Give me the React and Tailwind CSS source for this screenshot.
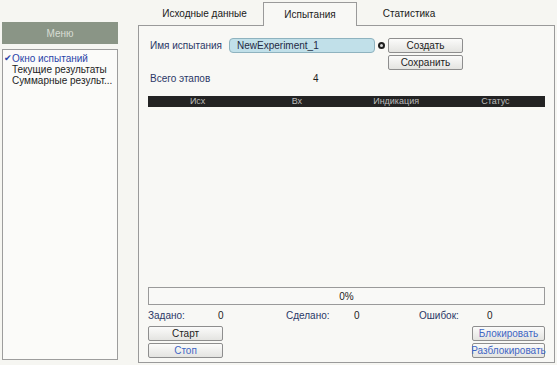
import React from 'react';

const font = { fontFamily: '"Liberation Sans", Arial, sans-serif' };

function Btn({ children, blue, className = '' }) {
    return (
        <div
            className={`flex h-[15px] items-center justify-center rounded-[2px] border border-[#8e8e8e] bg-gradient-to-b from-[#fbfbfa] to-[#e4e4e1] text-[10px] leading-none ${blue ? 'text-[#3f66c4]' : 'text-[#1d1d1d]'} ${className}`}
        >
            {children}
        </div>
    );
}

export default function App() {
    const columns = ['Исх', 'Вх', 'Индикация', 'Статус'];

    return (
        <div className="flex h-[365px] w-[557px] bg-[#f6f6f2] text-[10px] text-[#1d1d1d]" style={font}>
            {/* menu */}
            <div className="flex w-[120px] flex-col pl-[2px] pt-[22px]">
                <div className="flex h-[22px] w-[116px] items-center justify-center bg-[#8a9586] text-[#d8ddd4]">
                    Меню
                </div>
                <div className="mt-[5px] h-[311px] w-[116px] border border-[#9d9d9d] bg-[#fbfbf9] pt-[3px] leading-[11px]">
                    <div className="flex items-center text-[#2a44a8]">
                        <span className="w-[9px] pl-[1px] text-[9px] leading-none">✔</span>
                        Окно испытаний
                    </div>
                    <div className="pl-[9px]">Текущие результаты</div>
                    <div className="pl-[9px]">Суммарные результ...</div>
                </div>
            </div>

            {/* main area */}
            <div className="ml-[18px] flex w-[417px] flex-col pb-[2px]">
                <div className="flex h-[25px] items-end">
                    <div className="flex h-[23px] w-[125px] items-center justify-center pl-[8px] text-[#202020]">Исходные данные</div>
                    <div className="relative z-10 -mb-px flex h-[24px] w-[94px] items-center justify-center border border-b-0 border-[#9a9a9a] bg-[#f8f8f5] text-[#202020]">
                        Испытания
                    </div>
                    <div className="flex h-[23px] w-[104px] items-center justify-center text-[#202020]">Статистика</div>
                </div>

                <div className="flex flex-1 flex-col border border-[#9a9a9a] bg-[#f8f8f5] px-[9px] pt-[12px]">
                    <div className="flex">
                        <div className="flex h-[15px] w-[81px] items-center pl-[2px] text-[#2a3766]">Имя испытания</div>
                        <div className="flex h-[15px] w-[146px] items-center rounded-[4px] border border-[#8fb3bf] bg-[#c1e0e9] pl-[7px] text-[#1f2a44]">
                            NewExperiment_1
                        </div>
                        <div className="flex w-[13px] items-start justify-center pt-[4px]">
                            <div className="flex h-[7px] w-[7px] items-center justify-center rounded-full bg-[#1f1f1f]">
                                <div className="h-[3px] w-[3px] rounded-full bg-[#d8d8d8]" />
                            </div>
                        </div>
                        <div className="flex flex-col gap-[2px]">
                            <Btn className="w-[75px]">Создать</Btn>
                            <Btn className="w-[75px]">Сохранить</Btn>
                        </div>
                    </div>

                    <div className="mt-[2px] flex h-[12px] items-center text-[#2a3766]">
                        <span className="w-[165px] pl-[2px]">Всего этапов</span>
                        <span className="text-[#1d1d1d]">4</span>
                    </div>

                    <div className="mt-[12px] grid h-[11px] grid-cols-4 bg-[#232323] text-[9px] leading-[11px] text-[#bcbcbc]">
                        {columns.map(c => (
                            <div key={c} className="text-center">{c}</div>
                        ))}
                    </div>

                    <div className="flex-1" />

                    <div className="flex h-[18px] items-center justify-center border border-[#9a9a9a] bg-[#f9f9f7] text-[#1d1d1d]">
                        0%
                    </div>

                    <div className="mt-[4px] flex h-[12px] items-center">
                        <span className="w-[70px] text-[#2a3766]">Задано:</span>
                        <span className="w-[68px]">0</span>
                        <span className="w-[68px] text-[#2a3766]">Сделано:</span>
                        <span className="w-[65px]">0</span>
                        <span className="w-[68px] text-[#2a3766]">Ошибок:</span>
                        <span>0</span>
                    </div>

                    <div className="mt-[5px] mb-[4px] flex justify-between">
                        <div className="flex flex-col gap-[2px]">
                            <Btn className="w-[75px]">Старт</Btn>
                            <Btn blue className="w-[75px]">Стоп</Btn>
                        </div>
                        <div className="flex flex-col gap-[2px]">
                            <Btn blue className="w-[73px]">Блокировать</Btn>
                            <Btn blue className="w-[73px]">Разблокировать</Btn>
                        </div>
                    </div>
                </div>
            </div>
        </div>
    );
}
